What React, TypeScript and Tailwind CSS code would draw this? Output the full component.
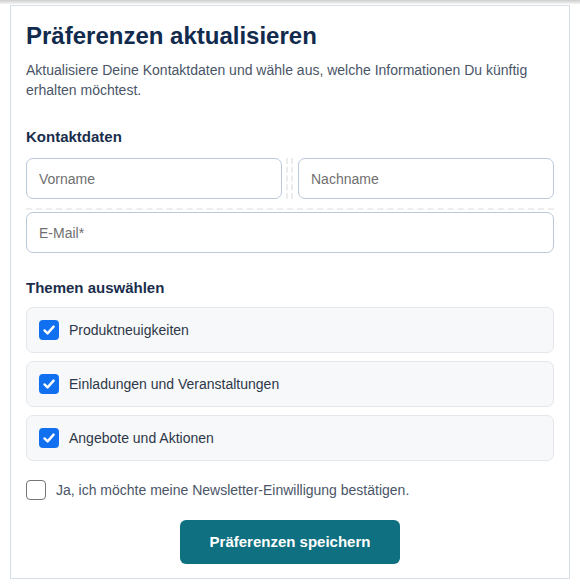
import React from "react";

const topics = [
  "Produktneuigkeiten",
  "Einladungen und Veranstaltungen",
  "Angebote und Aktionen",
];

function CheckedBox() {
  return (
    <span className="flex h-[20px] w-[20px] shrink-0 items-center justify-center rounded-[4px] bg-[#1170f0]">
      <svg width="14" height="14" viewBox="0 0 14 14" fill="none">
        <path
          d="M2.5 7.4 L5.6 10.4 L11.6 3.6"
          stroke="white"
          strokeWidth="2.4"
          strokeLinecap="round"
          strokeLinejoin="round"
        />
      </svg>
    </span>
  );
}

function TextInput({ placeholder }: { placeholder: string }) {
  return (
    <input
      type="text"
      placeholder={placeholder}
      className="h-[41px] w-full rounded-[7px] border border-[#b9c8db] bg-white pl-3 text-[14px] text-[#333] placeholder:text-[#6f6f6f] outline-none"
    />
  );
}

export default function App() {
  return (
    <div className="h-[586px] w-[580px] bg-white font-['Liberation_Sans',Arial,sans-serif]">
      <div className="h-[4px] bg-gradient-to-b from-[#cdcdcd] to-[#f4f4f4]" />
      <div className="ml-[10px] mt-px w-[560px] border border-[#d5dde8] px-[15px] pt-[15px] pb-[14px]">
        <h1 className="text-[24px] font-bold leading-[29px] text-[#112a4d]">
          Präferenzen aktualisieren
        </h1>
        <p className="mt-[10px] text-[14px] leading-[20px] text-[#4a5568]">
          Aktualisiere Deine Kontaktdaten und wähle aus, welche Informationen Du
          künftig erhalten möchtest.
        </p>

        <h2 className="mt-[27px] text-[15px] font-bold leading-[20px] text-[#1a2e4c]">
          Kontaktdaten
        </h2>
        <div className="relative mt-[11px] grid grid-cols-2 gap-x-4 gap-y-[13px]">
          <TextInput placeholder="Vorname" />
          <TextInput placeholder="Nachname" />
          <div className="col-span-2">
            <TextInput placeholder="E-Mail*" />
          </div>
          {/* faint editor guides between the fields */}
          <div className="pointer-events-none absolute left-[260px] top-0 h-[41px] w-[7px] border-x-2 border-dashed border-[#ececec]" />
          <div className="pointer-events-none absolute left-0 right-0 top-[50px] border-t-2 border-dashed border-[#eeeeee]" />
        </div>

        <h2 className="mt-[25px] text-[15px] font-bold leading-[20px] text-[#1a2e4c]">
          Themen auswählen
        </h2>
        <div className="mt-[9px] flex flex-col gap-2">
          {topics.map((t) => (
            <label
              key={t}
              className="flex h-[46px] items-center gap-[10px] rounded-[7px] border border-[#e3e6eb] bg-[#f7f8fa] pl-3"
            >
              <CheckedBox />
              <span className="text-[14px] text-[#2d3748]">{t}</span>
            </label>
          ))}
        </div>

        <label className="mt-[19px] flex h-[20px] items-center gap-[10px]">
          <span className="h-[20px] w-[20px] shrink-0 rounded-[4px] border border-[#767676] bg-white" />
          <span className="text-[14px] text-[#4a5568]">
            Ja, ich möchte meine Newsletter-Einwilligung bestätigen.
          </span>
        </label>

        <div className="mt-[20px] flex justify-center">
          <button className="h-[44px] w-[220px] rounded-[6px] bg-[#0e7080] text-[15px] font-bold text-white">
            Präferenzen speichern
          </button>
        </div>
      </div>
    </div>
  );
}
